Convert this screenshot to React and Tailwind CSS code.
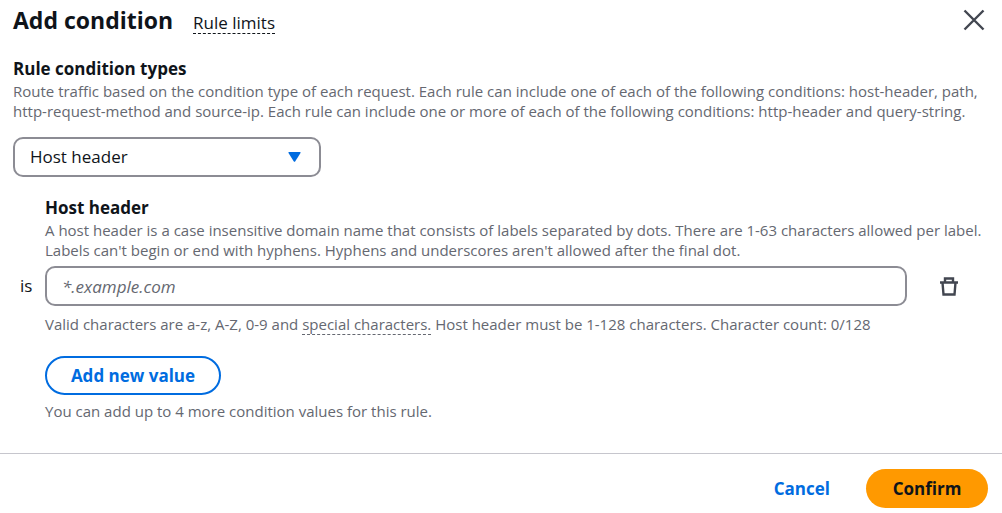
import { useState } from "react";

const helpText = "text-[15px] leading-5 text-[#656871]";
const labelText = "text-[17px] leading-6 font-bold";

function CloseIcon() {
  return (
    <svg className="size-6" viewBox="0 0 24 24" fill="none" stroke="#424650" strokeWidth="2.4" aria-hidden="true">
      <path d="M2.5 2.5l19 19M21.5 2.5l-19 19" />
    </svg>
  );
}

function TrashIcon() {
  return (
    <svg className="size-5" viewBox="0 0 20 20" fill="none" stroke="#424650" strokeWidth="2.4" aria-hidden="true">
      <path d="M1 6.5h18M6 6.5V2.5h8v4M3.5 6.5l1 12h11l1-12" />
    </svg>
  );
}

function App() {
  const [type, setType] = useState("host-header");
  const [value, setValue] = useState("");

  return (
    <div className="w-full bg-white font-['Open_Sans',sans-serif] text-[#0f141a]">
      {/* header */}
      <header className="flex items-center justify-between pl-[13px] pr-4 pt-1">
        <div className="flex items-baseline gap-5">
          <h1 className="text-[23px] leading-8 font-bold">Add condition</h1>
          <a href="#limits" className="border-b border-dashed border-[#0f141a] text-[17px] leading-5">Rule limits</a>
        </div>
        <button type="button" aria-label="Close"><CloseIcon /></button>
      </header>

      <main className="px-[13px] pt-[21px] pb-8">
        {/* condition type */}
        <label htmlFor="type" className={`block ${labelText}`}>Rule condition types</label>
        <p className={helpText}>
          Route traffic based on the condition type of each request. Each rule can include one of each of the following conditions: host-header, path,
          <br />
          http-request-method and source-ip. Each rule can include one or more of each of the following conditions: http-header and query-string.
        </p>
        <div className="mt-4 grid w-[308px] items-center">
          <select
            id="type"
            value={type}
            onChange={(e) => setType(e.target.value)}
            className="col-start-1 row-start-1 h-10 appearance-none rounded-[10px] border-2 border-[#8c8c94] bg-white px-[15px] text-[17px]"
          >
            <option value="host-header">Host header</option>
            <option value="path">Path</option>
            <option value="source-ip">Source IP</option>
          </select>
          <svg className="pointer-events-none col-start-1 row-start-1 mr-5 h-[10px] w-[13px] justify-self-end" viewBox="0 0 13 10" fill="#006ce0" aria-hidden="true">
            <path d="M1 0h11q1 0 .5 1L7.3 9.3q-.8 1-1.6 0L.5 1Q0 0 1 0z" />
          </svg>
        </div>

        {/* host header values */}
        <section className="mt-[19px] grid grid-cols-[32px_minmax(0,1fr)_82px] items-center">
          <div className="col-start-2 col-end-4">
            <label htmlFor="host" className={`block ${labelText}`}>Host header</label>
            <p className={helpText}>
              A host header is a case insensitive domain name that consists of labels separated by dots. There are 1-63 characters allowed per label.
              <br />
              Labels can't begin or end with hyphens. Hyphens and underscores aren't allowed after the final dot.
            </p>
          </div>
          <span className="col-start-1 mt-[6px] pl-[7px] text-[17px]">is</span>
          <input
            id="host"
            type="text"
            value={value}
            onChange={(e) => setValue(e.target.value)}
            placeholder="*.example.com"
            className="mt-[6px] h-10 w-full rounded-[10px] border-2 border-[#8c8c94] px-[15px] text-[17px] placeholder:italic placeholder:text-[#656871]"
          />
          <button type="button" aria-label="Remove" className="mt-[6px] ml-8 justify-self-start"><TrashIcon /></button>
          <div className="col-start-2 col-end-4">
            <p className={`mt-2 ${helpText}`}>
              Valid characters are a-z, A-Z, 0-9 and{" "}
              <a href="#special" className="border-b border-dashed border-[#656871]">special characters.</a>
              {" "}Host header must be 1-128 characters. Character count: {value.length}/128
            </p>
            <button type="button" className="mt-[22px] h-[39px] w-[176px] rounded-full border-2 border-[#006ce0] text-[17px] font-bold text-[#006ce0]">
              Add new value
            </button>
            <p className={`mt-[6px] ${helpText}`}>You can add up to 4 more condition values for this rule.</p>
          </div>
        </section>
      </main>

      <footer className="flex items-center justify-end gap-9 border-t border-[#c6c6cd] pt-[15px] pr-[14px] pb-1">
        <button type="button" className="text-[17px] font-bold text-[#006ce0]">Cancel</button>
        <button type="button" className="h-[39px] w-[122px] rounded-full bg-[#ff9900] text-[17px] font-bold">Confirm</button>
      </footer>
    </div>
  );
}

export default App;
